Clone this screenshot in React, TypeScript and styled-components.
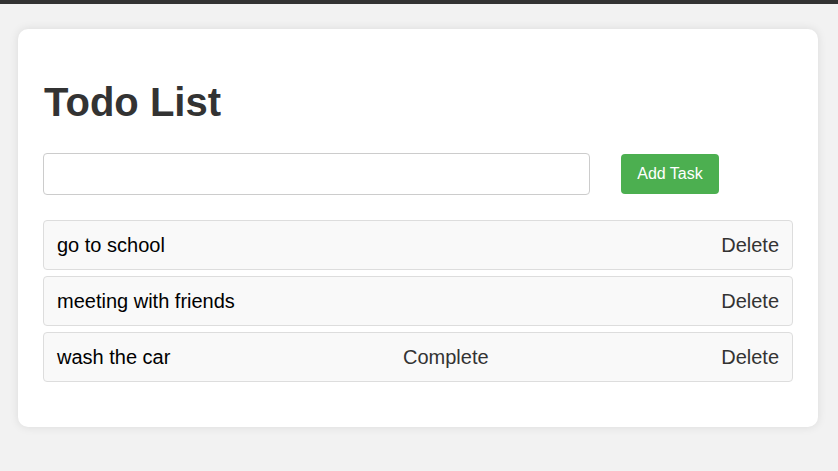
import React from "react";
import styled, { createGlobalStyle } from "styled-components";

const Global = createGlobalStyle`
  html, body { margin: 0; padding: 0; }
  body {
    background: #f2f2f2;
    font-family: "Liberation Sans", Arial, sans-serif;
    border-top: 4px solid #333;
    min-height: 467px;
  }
  * { box-sizing: border-box; }
`;

const Card = styled.div`
  width: 800px;
  margin: 25px 0 0 18px;
  background: #fff;
  border-radius: 10px;
  box-shadow: 0 0 10px rgba(0, 0, 0, 0.1);
  padding: 25px 25px 45px;
`;

const Title = styled.h1`
  font-size: 40px;
  font-weight: bold;
  color: #333;
  margin: 25px 0 28px 1px;
  line-height: 46px;
`;

const Form = styled.div`
  display: flex;
  align-items: center;
  margin-bottom: 25px;
`;

const Input = styled.input`
  width: 547px;
  height: 42px;
  border: 1px solid #ccc;
  border-radius: 4px;
  padding: 0 10px;
  font-size: 16px;
  font-family: inherit;
  margin-right: 31px;
`;

const AddButton = styled.button`
  width: 98px;
  height: 40px;
  background: #4caf50;
  color: #fff;
  border: none;
  border-radius: 4px;
  font-size: 16px;
  font-family: inherit;
  padding: 0;
`;

const List = styled.ul`
  list-style: none;
  margin: 0;
  padding: 0;
  display: flex;
  flex-direction: column;
  gap: 6px;
`;

const Row = styled.li`
  display: flex;
  justify-content: space-between;
  align-items: center;
  height: 50px;
  padding: 0 13px;
  background: #f9f9f9;
  border: 1px solid #ddd;
  border-radius: 4px;
  font-size: 20px;
  color: #000;
`;

const TaskText = styled.span`
  font-size: 20px;
`;

const RowButton = styled.button`
  background: transparent;
  border: none;
  padding: 0;
  font-size: 20px;
  font-family: inherit;
  color: #333;
`;

const tasks = [
  { text: "go to school", complete: false },
  { text: "meeting with friends", complete: false },
  { text: "wash the car", complete: true },
];

export default function App() {
  return (
    <>
      <Global />
      <Card>
        <Title>Todo List</Title>
        <Form>
          <Input type="text" />
          <AddButton>Add Task</AddButton>
        </Form>
        <List>
          {tasks.map((t) => (
            <Row key={t.text}>
              <TaskText>{t.text}</TaskText>
              {t.complete && <RowButton>Complete</RowButton>}
              <RowButton>Delete</RowButton>
            </Row>
          ))}
        </List>
      </Card>
    </>
  );
}
